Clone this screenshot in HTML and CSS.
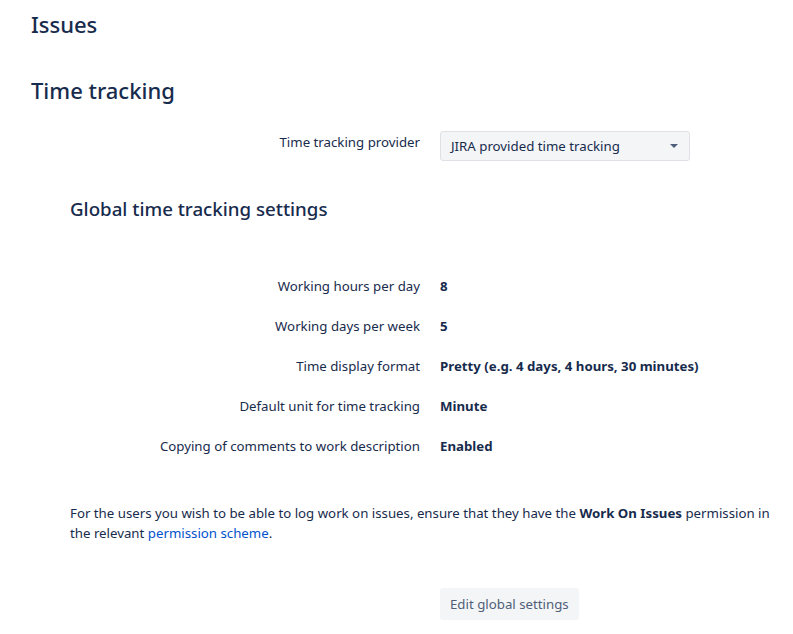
FILE: index.html
```html
<!DOCTYPE html>
<html>
<head>
<meta charset="utf-8">
<link rel="stylesheet" href="styles.css">
</head>
<body>
<div class="page">
  <h1 class="page-title">Issues</h1>
  <h2 class="section-title">Time tracking</h2>
  <div class="field provider-field">
    <div class="label">Time tracking provider</div>
    <div class="value">
      <div class="select">
        <span>JIRA provided time tracking</span>
        <svg class="caret" width="8" height="4" viewBox="0 0 8 4"><path d="M0 0h8L4 4z" fill="#505f79"/></svg>
      </div>
    </div>
  </div>
  <h3 class="sub-title">Global time tracking settings</h3>
  <div class="settings">
    <div class="field"><div class="label">Working hours per day</div><div class="value strong">8</div></div>
    <div class="field"><div class="label">Working days per week</div><div class="value strong">5</div></div>
    <div class="field"><div class="label">Time display format</div><div class="value strong">Pretty (e.g. 4 days, 4 hours, 30 minutes)</div></div>
    <div class="field"><div class="label">Default unit for time tracking</div><div class="value strong">Minute</div></div>
    <div class="field"><div class="label">Copying of comments to work description</div><div class="value strong">Enabled</div></div>
  </div>
  <p class="note">For the users you wish to be able to log work on issues, ensure that they have the <strong>Work On Issues</strong> permission in the relevant <a href="#">permission scheme</a>.</p>
  <div class="actions">
    <button class="button">Edit global settings</button>
  </div>
</div>
</body>
</html>
```
FILE: styles.css
```css
html, body {
  margin: 0;
  padding: 0;
  background: #fff;
}
body {
  font-family: "Noto Sans", "Open Sans", sans-serif;
  font-size: 13.25px;
  color: #172b4d;
}
.page {
  padding: 9px 0 0 0;
}
.page-title {
  margin: 0 0 0 31px;
  font-size: 22px;
  font-weight: 500;
  line-height: 30px;
}
.section-title {
  margin: 36px 0 0 31px;
  font-size: 22px;
  font-weight: 500;
  line-height: 30px;
}
.field {
  display: grid;
  grid-template-columns: 420px auto;
  column-gap: 20px;
  align-items: center;
  min-height: 40px;
}
.provider-field {
  margin-top: 26px;
  align-items: start;
}
.provider-field .label {
  padding-top: 1px;
}
.label {
  text-align: right;
  line-height: 20px;
}
.value {
  line-height: 20px;
}
.strong {
  font-weight: 700;
}
.select {
  width: 248px;
  height: 28px;
  box-sizing: content-box;
  border: 1px solid #dfe1e6;
  border-radius: 3px;
  background: #f4f5f7;
  display: flex;
  align-items: center;
  justify-content: space-between;
}
.select span {
  padding-left: 10px;
}
.caret {
  margin-right: 11px;
}
.sub-title {
  margin: 26px 0 0 70px;
  font-size: 18.7px;
  font-weight: 500;
  line-height: 24px;
}
.settings {
  margin-top: 45px;
}
.note {
  margin: 37px 8px 0 70px;
  line-height: 20px;
}
.note a {
  color: #0052cc;
  text-decoration: none;
}
.actions {
  margin-top: 45px;
  padding-left: 440px;
}
.button {
  font-family: inherit;
  font-size: 13.25px;
  color: #505f79;
  background: #f4f5f7;
  border: none;
  border-radius: 3px;
  height: 32px;
  padding: 0 10px;
}
```
